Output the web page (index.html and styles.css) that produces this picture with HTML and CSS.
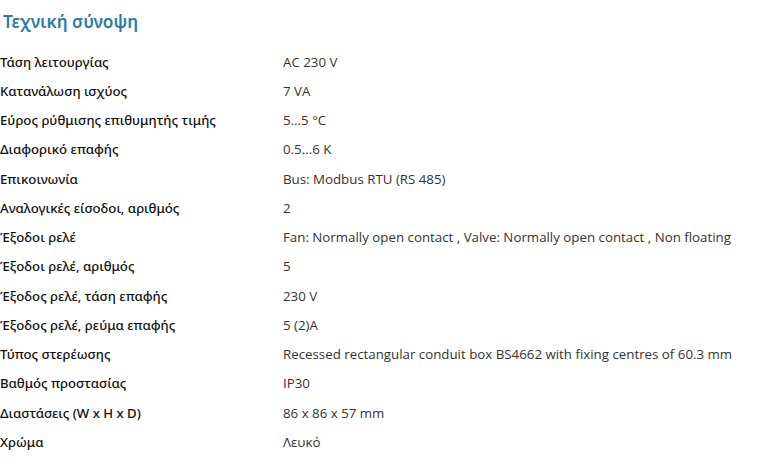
FILE: index.html
```html
<!DOCTYPE html>
<html lang="el">
<head>
<meta charset="utf-8">
<link rel="stylesheet" href="styles.css">
</head>
<body>
<section class="summary">
  <h2 class="title">Τεχνική σύνοψη</h2>
  <dl class="specs">
    <dt>Τάση λειτουργίας</dt><dd>AC 230 V</dd>
    <dt>Κατανάλωση ισχύος</dt><dd>7 VA</dd>
    <dt>Εύρος ρύθμισης επιθυμητής τιμής</dt><dd>5...5 °C</dd>
    <dt>Διαφορικό επαφής</dt><dd>0.5...6 K</dd>
    <dt>Επικοινωνία</dt><dd>Bus: Modbus RTU (RS 485)</dd>
    <dt>Αναλογικές είσοδοι, αριθμός</dt><dd>2</dd>
    <dt>Έξοδοι ρελέ</dt><dd>Fan: Normally open contact , Valve: Normally open contact , Non floating</dd>
    <dt>Έξοδοι ρελέ, αριθμός</dt><dd>5</dd>
    <dt>Έξοδος ρελέ, τάση επαφής</dt><dd>230 V</dd>
    <dt>Έξοδος ρελέ, ρεύμα επαφής</dt><dd>5 (2)A</dd>
    <dt>Τύπος στερέωσης</dt><dd>Recessed rectangular conduit box BS4662 with fixing centres of 60.3 mm</dd>
    <dt>Βαθμός προστασίας</dt><dd>IP30</dd>
    <dt>Διαστάσεις (W x H x D)</dt><dd>86 x 86 x 57 mm</dd>
    <dt>Χρώμα</dt><dd>Λευκό</dd>
  </dl>
</section>
</body>
</html>
```
FILE: styles.css
```css
html, body {
  margin: 0;
  padding: 0;
  background: #ffffff;
}
.summary {
  padding: 10px 0 0 0;
}
.title {
  margin: 0 0 13px 3px;
  font-family: "Noto Sans", sans-serif;
  font-size: 17.3px;
  line-height: 24px;
  font-weight: 600;
  color: #2b7ca6;
}
.specs {
  margin: 0;
  display: grid;
  grid-template-columns: 283px 1fr;
  grid-auto-rows: 29.25px;
  align-items: center;
}
.specs dt {
  font-family: "Noto Sans", sans-serif;
  font-size: 13.2px;
  font-weight: 500;
  color: #111111;
  white-space: nowrap;
}
.specs dd {
  margin: 0;
  font-family: "Open Sans", sans-serif;
  font-size: 13.3px;
  color: #333333;
  white-space: nowrap;
}
```
